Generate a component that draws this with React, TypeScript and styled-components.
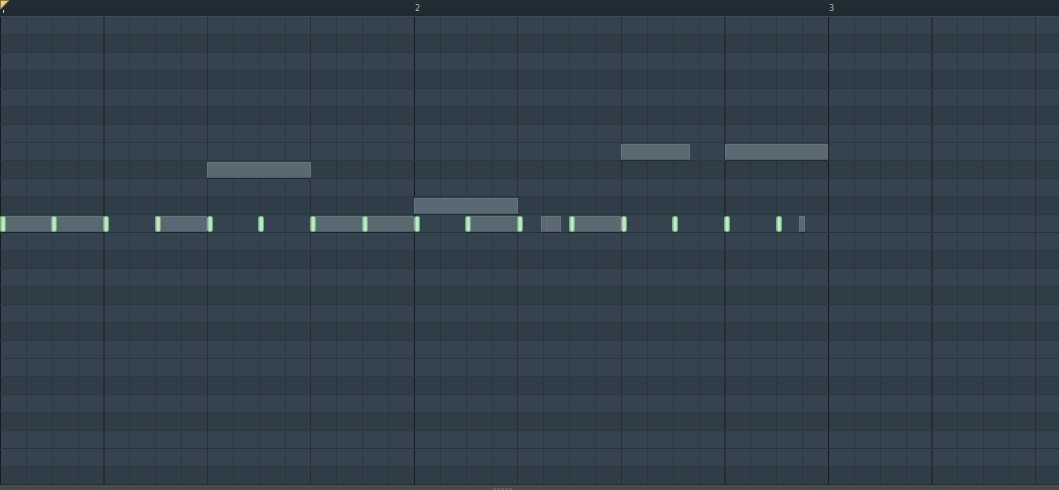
import React from "react";
import styled, { createGlobalStyle } from "styled-components";

const BAR = 414;
const STEP = BAR / 16;
const ROW_H = 18;
const ROWS = 26;

const Global = createGlobalStyle`
  html, body { margin: 0; padding: 0; background: #1c262d; }
  body { font-family: "DejaVu Sans", "Liberation Sans", sans-serif; overflow: hidden; }
`;

const Frame = styled.div`
  width: 1059px;
  height: 490px;
  display: flex;
  flex-direction: column;
  overflow: hidden;
`;

const Timeline = styled.div`
  height: 17px;
  flex: none;
  display: flex;
  position: relative;
  background: linear-gradient(#222e36, #1d282f);
  border-bottom: 1px solid #3b4a54;
  box-sizing: border-box;
`;

const BarCell = styled.div`
  width: ${BAR}px;
  flex: none;
  box-sizing: border-box;
  padding-left: 1px;
  padding-top: 4px;
  font-size: 8px;
  line-height: 9px;
  color: #a9b3b8;
`;

const Marker = styled.svg`
  position: absolute;
  left: 0;
  top: 0;
`;

const Grid = styled.div`
  position: relative;
  height: 467px;
  flex: none;
  overflow: hidden;
  display: flex;
  flex-direction: column;
`;

const Row = styled.div<{ $black: boolean; $octave: boolean }>`
  height: ${ROW_H}px;
  flex: none;
  box-sizing: border-box;
  border-bottom: 1px solid ${(p) => (p.$octave ? "#25323b" : "#2b3842")};
  background:
    repeating-linear-gradient(to right, #141c22 0 1px, transparent 1px ${BAR}px),
    repeating-linear-gradient(to right, rgba(16, 24, 30, 0.28) 0 1px, transparent 1px ${BAR / 4}px),
    repeating-linear-gradient(to right, rgba(16, 24, 30, 0.2) 0 1px, transparent 1px ${STEP}px),
    ${(p) => (p.$black ? "#2f3d47" : "#34434d")};
`;

const NoteLayer = styled.div`
  position: absolute;
  inset: 0;
  pointer-events: none;
`;

const GrayNote = styled.div`
  position: absolute;
  height: 16px;
  box-sizing: border-box;
  background: #5a6871;
  border: 1px solid #66747d;
  border-bottom-color: #4f5d66;
  border-radius: 1px;
  box-shadow: 0 1px 0 rgba(0, 0, 0, 0.25);
`;

const GreenNote = styled.div`
  position: absolute;
  width: 6px;
  height: 16px;
  box-sizing: border-box;
  border-radius: 2px;
  background: linear-gradient(to right, #86c290, #cdf1cf 45%, #a5d8ab 100%);
  border: 1px solid #74ad7f;
`;

const Scroll = styled.div`
  flex: 1;
  background: #474a4c;
  border-top: 1px solid #2b2f31;
  display: flex;
  align-items: flex-end;
`;

const Grip = styled.div`
  display: flex;
  gap: 1px;
  margin-left: 493px;
`;

const Dot = styled.div`
  width: 3px;
  height: 2px;
  background: #5a5e60;
`;

const grayNotes: [number, number, number][] = [
  [11, 0, 103.5],
  [11, 155.25, 207],
  [11, 310.5, 414],
  [11, 465.75, 517.5],
  [11, 540.5, 548],
  [11, 547, 561],
  [11, 569.25, 621],
  [11, 798.5, 805],
  [8, 207, 310.5],
  [10, 414, 517.5],
  [7, 621, 690],
  [7, 724.5, 828],
];

const greens = Array.from({ length: 16 }, (_, i) => i * (STEP * 2) - 0.5);

const semitone = (k: number) => (((11 - k) % 12) + 12) % 12;
const isBlack = (k: number) => [1, 3, 6, 8, 10].includes(semitone(k));

export default function App() {
  return (
    <Frame>
      <Global />
      <Timeline>
        <BarCell />
        <BarCell>2</BarCell>
        <BarCell>3</BarCell>
        <Marker width="12" height="16" viewBox="0 0 12 16">
          <path d="M0.5 0.5 H9 L0.5 9 Z" fill="#e9cd86" stroke="#8a7444" strokeWidth="1" />
          <rect x="3" y="10" width="1" height="3" fill="#cfd6da" />
        </Marker>
      </Timeline>
      <Grid>
        {Array.from({ length: ROWS }, (_, k) => (
          <Row key={k} $black={isBlack(k)} $octave={semitone(k) === 0} />
        ))}
        <NoteLayer>
          {grayNotes.map(([r, a, b], i) => (
            <GrayNote key={i} style={{ top: r * ROW_H + 1, left: a, width: b - a }} />
          ))}
          {greens.map((x, i) => (
            <GreenNote key={i} style={{ top: 11 * ROW_H + 1, left: Math.max(0, x) }} />
          ))}
        </NoteLayer>
      </Grid>
      <Scroll>
        <Grip>
          <Dot />
          <Dot />
          <Dot />
          <Dot />
          <Dot />
        </Grip>
      </Scroll>
    </Frame>
  );
}
